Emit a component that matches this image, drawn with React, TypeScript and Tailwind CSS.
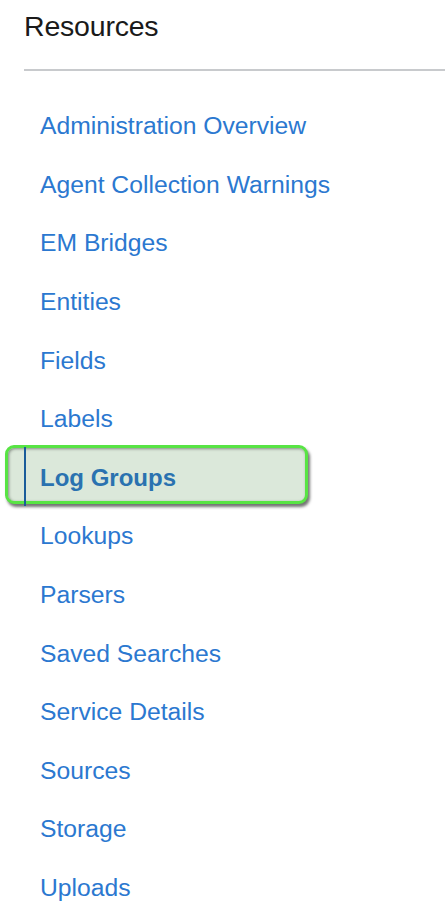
const items = [
  "Administration Overview",
  "Agent Collection Warnings",
  "EM Bridges",
  "Entities",
  "Fields",
  "Labels",
  "Log Groups",
  "Lookups",
  "Parsers",
  "Saved Searches",
  "Service Details",
  "Sources",
  "Storage",
  "Uploads",
];

export default function App() {
  return (
    <div className="min-h-screen bg-white font-['Liberation_Sans',Arial,sans-serif]">
      <div className="pl-6 pt-[10px]">
        <h2 className="text-[28.5px] leading-[32px] text-[#1a1a1a] tracking-[-0.2px]">Resources</h2>
        <div className="mt-[27px] h-[2px] bg-[#c8cacd]" />
      </div>

      <ul className="pt-[26px]">
        {items.map((name) => {
          const active = name === "Log Groups";
          if (active) {
            return (
              <li key={name} className="relative h-[58.6px] flex items-center">
                <div className="absolute left-[5px] -top-[4px] w-[303px] h-[59px] rounded-[9px] border-[3px] border-[#58e444] bg-[#dbe8da] shadow-[2px_3px_3px_rgba(0,0,0,0.55),inset_1px_1px_3px_rgba(0,0,0,0.4)]" />
                <div className="absolute left-[24px] -top-[2px] w-[2px] h-[59px] bg-[#1a5c9a]" />
                <a className="relative pl-10 text-[24px] leading-[28px] font-bold text-[#2a72b0]">{name}</a>
              </li>
            );
          }
          return (
            <li key={name} className="h-[58.6px] flex items-center">
              <a className="pl-10 text-[24.7px] leading-[28px] text-[#2b78d0]">{name}</a>
            </li>
          );
        })}
      </ul>
    </div>
  );
}
